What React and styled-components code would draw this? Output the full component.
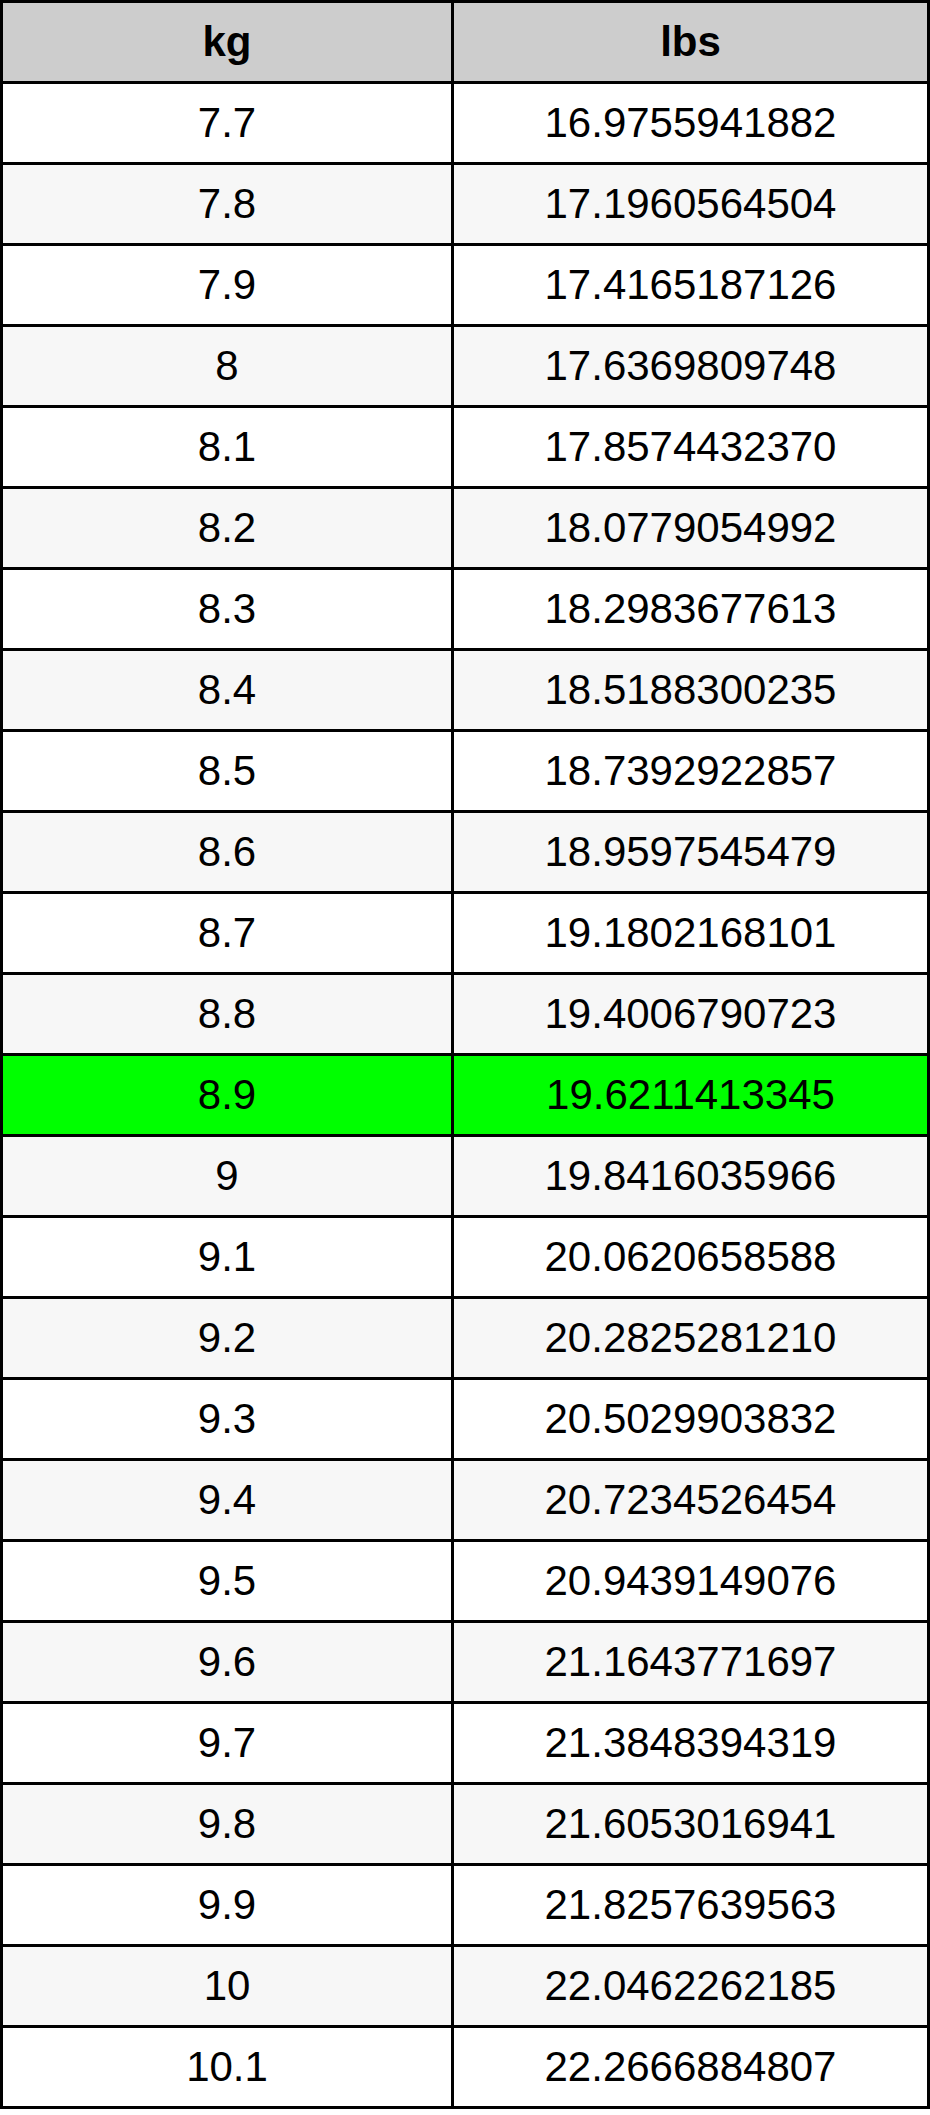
import React from "react";
import styled, { createGlobalStyle } from "styled-components";

const GlobalStyle = createGlobalStyle`
  html, body {
    margin: 0;
    padding: 0;
    background: #ffffff;
  }
  body {
    font-family: "Liberation Sans", Arial, sans-serif;
  }
`;

const Table = styled.div`
  display: grid;
  gap: 3px;
  width: 930px;
  box-sizing: border-box;
  padding: 3px;
  background: #000000;
`;

const Row = styled.div`
  display: grid;
  grid-template-columns: 448px 473px;
  gap: 3px;
`;

const Cell = styled.div`
  height: 78px;
  display: flex;
  align-items: center;
  justify-content: center;
  font-family: "Liberation Sans", Arial, sans-serif;
  font-size: 42px;
  font-weight: ${(p) => (p.$head ? 700 : 400)};
  color: #000000;
  background: ${(p) => p.$bg};
`;

const rows = [
  ["7.7", "16.9755941882"],
  ["7.8", "17.1960564504"],
  ["7.9", "17.4165187126"],
  ["8", "17.6369809748"],
  ["8.1", "17.8574432370"],
  ["8.2", "18.0779054992"],
  ["8.3", "18.2983677613"],
  ["8.4", "18.5188300235"],
  ["8.5", "18.7392922857"],
  ["8.6", "18.9597545479"],
  ["8.7", "19.1802168101"],
  ["8.8", "19.4006790723"],
  ["8.9", "19.6211413345"],
  ["9", "19.8416035966"],
  ["9.1", "20.0620658588"],
  ["9.2", "20.2825281210"],
  ["9.3", "20.5029903832"],
  ["9.4", "20.7234526454"],
  ["9.5", "20.9439149076"],
  ["9.6", "21.1643771697"],
  ["9.7", "21.3848394319"],
  ["9.8", "21.6053016941"],
  ["9.9", "21.8257639563"],
  ["10", "22.0462262185"],
  ["10.1", "22.2666884807"],
];

const HIGHLIGHT = "8.9";

function rowBg(kg, i) {
  if (kg === HIGHLIGHT) return "#00ff00";
  return i % 2 === 0 ? "#ffffff" : "#f7f7f7";
}

export default function App() {
  return (
    <>
      <GlobalStyle />
      <Table>
        <Row>
          <Cell $head $bg="#cdcdcd">kg</Cell>
          <Cell $head $bg="#cdcdcd">lbs</Cell>
        </Row>
        {rows.map(([kg, lbs], i) => (
          <Row key={kg}>
            <Cell $bg={rowBg(kg, i)}>{kg}</Cell>
            <Cell $bg={rowBg(kg, i)}>{lbs}</Cell>
          </Row>
        ))}
      </Table>
    </>
  );
}
